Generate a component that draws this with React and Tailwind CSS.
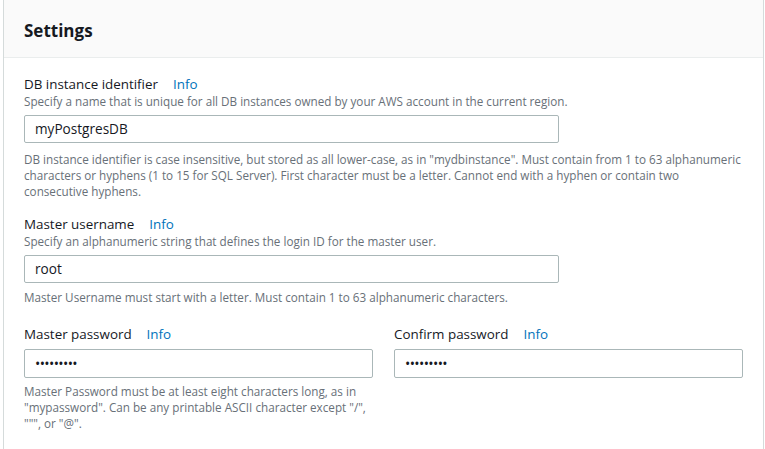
import React from "react";

function Label({ children }) {
  return (
    <div className="flex items-center h-[18px] text-[13.4px] leading-[18px] text-[#16191f]">
      <span>{children}</span>
      <span className="ml-[15px] text-[#0073bb]">Info</span>
    </div>
  );
}

function Box({ children, className = "" }) {
  return (
    <div
      className={
        "border border-[#aab7b8] rounded-[2px] bg-white flex items-center px-[10px] text-[13.6px] text-[#16191f] " +
        className
      }
    >
      {children}
    </div>
  );
}

function Dots() {
  return (
    <span className="text-[14px] tracking-[-0.6px] text-[#16191f] leading-none">
      •••••••••
    </span>
  );
}

export default function App() {
  return (
    <div
      className="w-[765px] h-[449px] bg-white overflow-hidden"
      style={{ fontFamily: '"Open Sans", "Noto Sans", sans-serif' }}
    >
      <div className="ml-[3px] w-[761px] h-full border-l border-r border-[#d5dbdb] bg-white">
        <div className="h-[58px] bg-[#fafafa] border-b border-[#eaeded] flex items-center px-[20px]">
          <span className="text-[17px] font-bold text-[#16191f] pt-[4px]">Settings</span>
        </div>
        <div className="px-[20px] pt-[17px] text-[11.7px]">
          <Label>DB instance identifier</Label>
          <div className="leading-[16px] text-[#687078] mt-0">
            Specify a name that is unique for all DB instances owned by your AWS account in the current region.
          </div>
          <Box className="mt-[6px] w-[535px] h-[28px]">myPostgresDB</Box>
          <div className="mt-[8px] leading-[16px] text-[#687078]">
            DB instance identifier is case insensitive, but stored as all lower-case, as in "mydbinstance". Must contain from 1 to 63 alphanumeric characters or hyphens (1 to 15 for SQL Server). First character must be a letter. Cannot end with a hyphen or contain two consecutive hyphens.
          </div>

          <div className="mt-[16px]">
            <Label>Master username</Label>
          </div>
          <div className="leading-[16px] text-[#687078]">
            Specify an alphanumeric string that defines the login ID for the master user.
          </div>
          <Box className="mt-[6px] w-[535px] h-[28px]">root</Box>
          <div className="mt-[6px] leading-[16px] text-[#687078]">
            Master Username must start with a letter. Must contain 1 to 63 alphanumeric characters.
          </div>

          <div className="mt-[20px] grid grid-cols-2 gap-x-[21px]">
            <div>
              <Label>Master password</Label>
              <Box className="mt-[6px] h-[29px]">
                <Dots />
              </Box>
              <div className="mt-[5px] leading-[16px] text-[#687078] pr-[6px]">
                Master Password must be at least eight characters long, as in "mypassword". Can be any printable ASCII character except "/", """, or "@".
              </div>
            </div>
            <div>
              <Label>Confirm password</Label>
              <Box className="mt-[6px] h-[29px]">
                <Dots />
              </Box>
            </div>
          </div>
        </div>
      </div>
    </div>
  );
}
